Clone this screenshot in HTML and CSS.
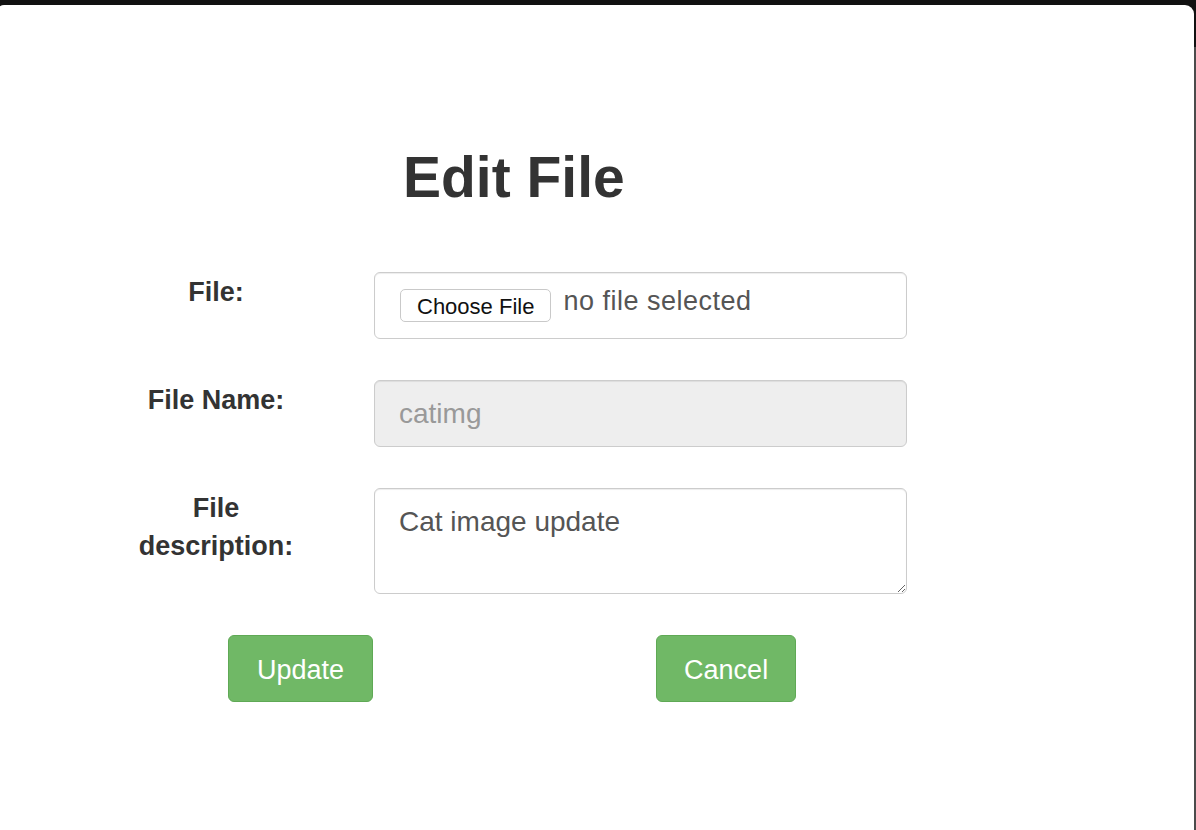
FILE: index.html
```html
<!DOCTYPE html>
<html lang="en">
<head>
<meta charset="utf-8">
<title>Edit File</title>
<link rel="stylesheet" href="styles.css">
</head>
<body>
  <div class="modal">
    <h1 class="title">Edit File</h1>
    <form class="form">
      <label class="label" for="file">File:</label>
      <div class="control file-control">
        <span class="file-btn">Choose File</span>
        <span class="file-text">no file selected</span>
      </div>

      <label class="label" for="name">File Name:</label>
      <input class="control text-input" id="name" type="text" value="catimg" disabled>

      <label class="label" for="desc">File description:</label>
      <textarea class="control text-area" id="desc">Cat image update</textarea>
    </form>
    <div class="actions">
      <button class="btn" type="button">Update</button>
      <button class="btn" type="button">Cancel</button>
    </div>
  </div>
</body>
</html>
```

FILE: styles.css
```css
html, body {
  margin: 0;
  padding: 0;
  height: 100%;
  overflow: hidden;
}

body {
  background:
    linear-gradient(#4b4b4b, #4b4b4b) no-repeat right 0 top 47px / 2px 100%,
    #111;
  font-family: "Liberation Sans", Arial, sans-serif;
  color: #333;
}

.modal {
  margin: 5px 0 0 -3px;
  width: 1197px;
  height: 840px;
  background: #fff;
  border-radius: 7px 9px 0 0;
  padding-top: 139px;
  box-sizing: border-box;
}

.title {
  margin: 0 0 62px 406px;
  font-size: 57px;
  line-height: 66px;
  font-weight: bold;
  color: #333;
}

.form {
  display: grid;
  grid-template-columns: 180px 533px;
  column-gap: 68px;
  row-gap: 41px;
  padding-left: 129px;
  align-items: start;
}

.label {
  font-size: 27px;
  line-height: 38px;
  font-weight: bold;
  text-align: center;
  padding-top: 1px;
  color: #333;
}

.control {
  box-sizing: border-box;
  width: 533px;
  border: 1px solid #ccc;
  border-radius: 6px;
  box-shadow: inset 0 1px 1px rgba(0, 0, 0, 0.075);
  font-family: "Liberation Sans", Arial, sans-serif;
  margin: 0;
}

.file-control {
  height: 67px;
  display: flex;
  align-items: center;
  padding-left: 25px;
  background: #fff;
}

.file-btn {
  box-sizing: border-box;
  height: 33px;
  display: flex;
  align-items: center;
  padding: 2px 16px 0 16px;
  border: 1px solid #c9c9c9;
  border-radius: 5px;
  background: #fff;
  font-size: 22px;
  color: #111;
}

.file-text {
  margin-left: 12px;
  margin-bottom: 8px;
  font-size: 27px;
  letter-spacing: 0.5px;
  color: #555;
}

.text-input {
  height: 67px;
  padding: 0 24px;
  font-size: 28px;
  line-height: 65px;
  color: #999;
  background: #eee;
  -webkit-text-fill-color: #999;
  opacity: 1;
}

.text-area {
  height: 106px;
  padding: 13px 24px;
  font-size: 28px;
  line-height: 39px;
  color: #555;
  background: #fff;
  resize: vertical;
  outline: none;
}

.actions {
  display: flex;
  gap: 283px;
  padding-left: 231px;
  margin-top: 41px;
}

.btn {
  box-sizing: border-box;
  height: 67px;
  padding: 3px 28px 0;
  background: #70b866;
  border: 1px solid #5fa955;
  border-radius: 6px;
  color: #fff;
  font-family: "Liberation Sans", Arial, sans-serif;
  font-size: 27px;
}

.btn + .btn {
  padding: 3px 27px 0;
}
```
